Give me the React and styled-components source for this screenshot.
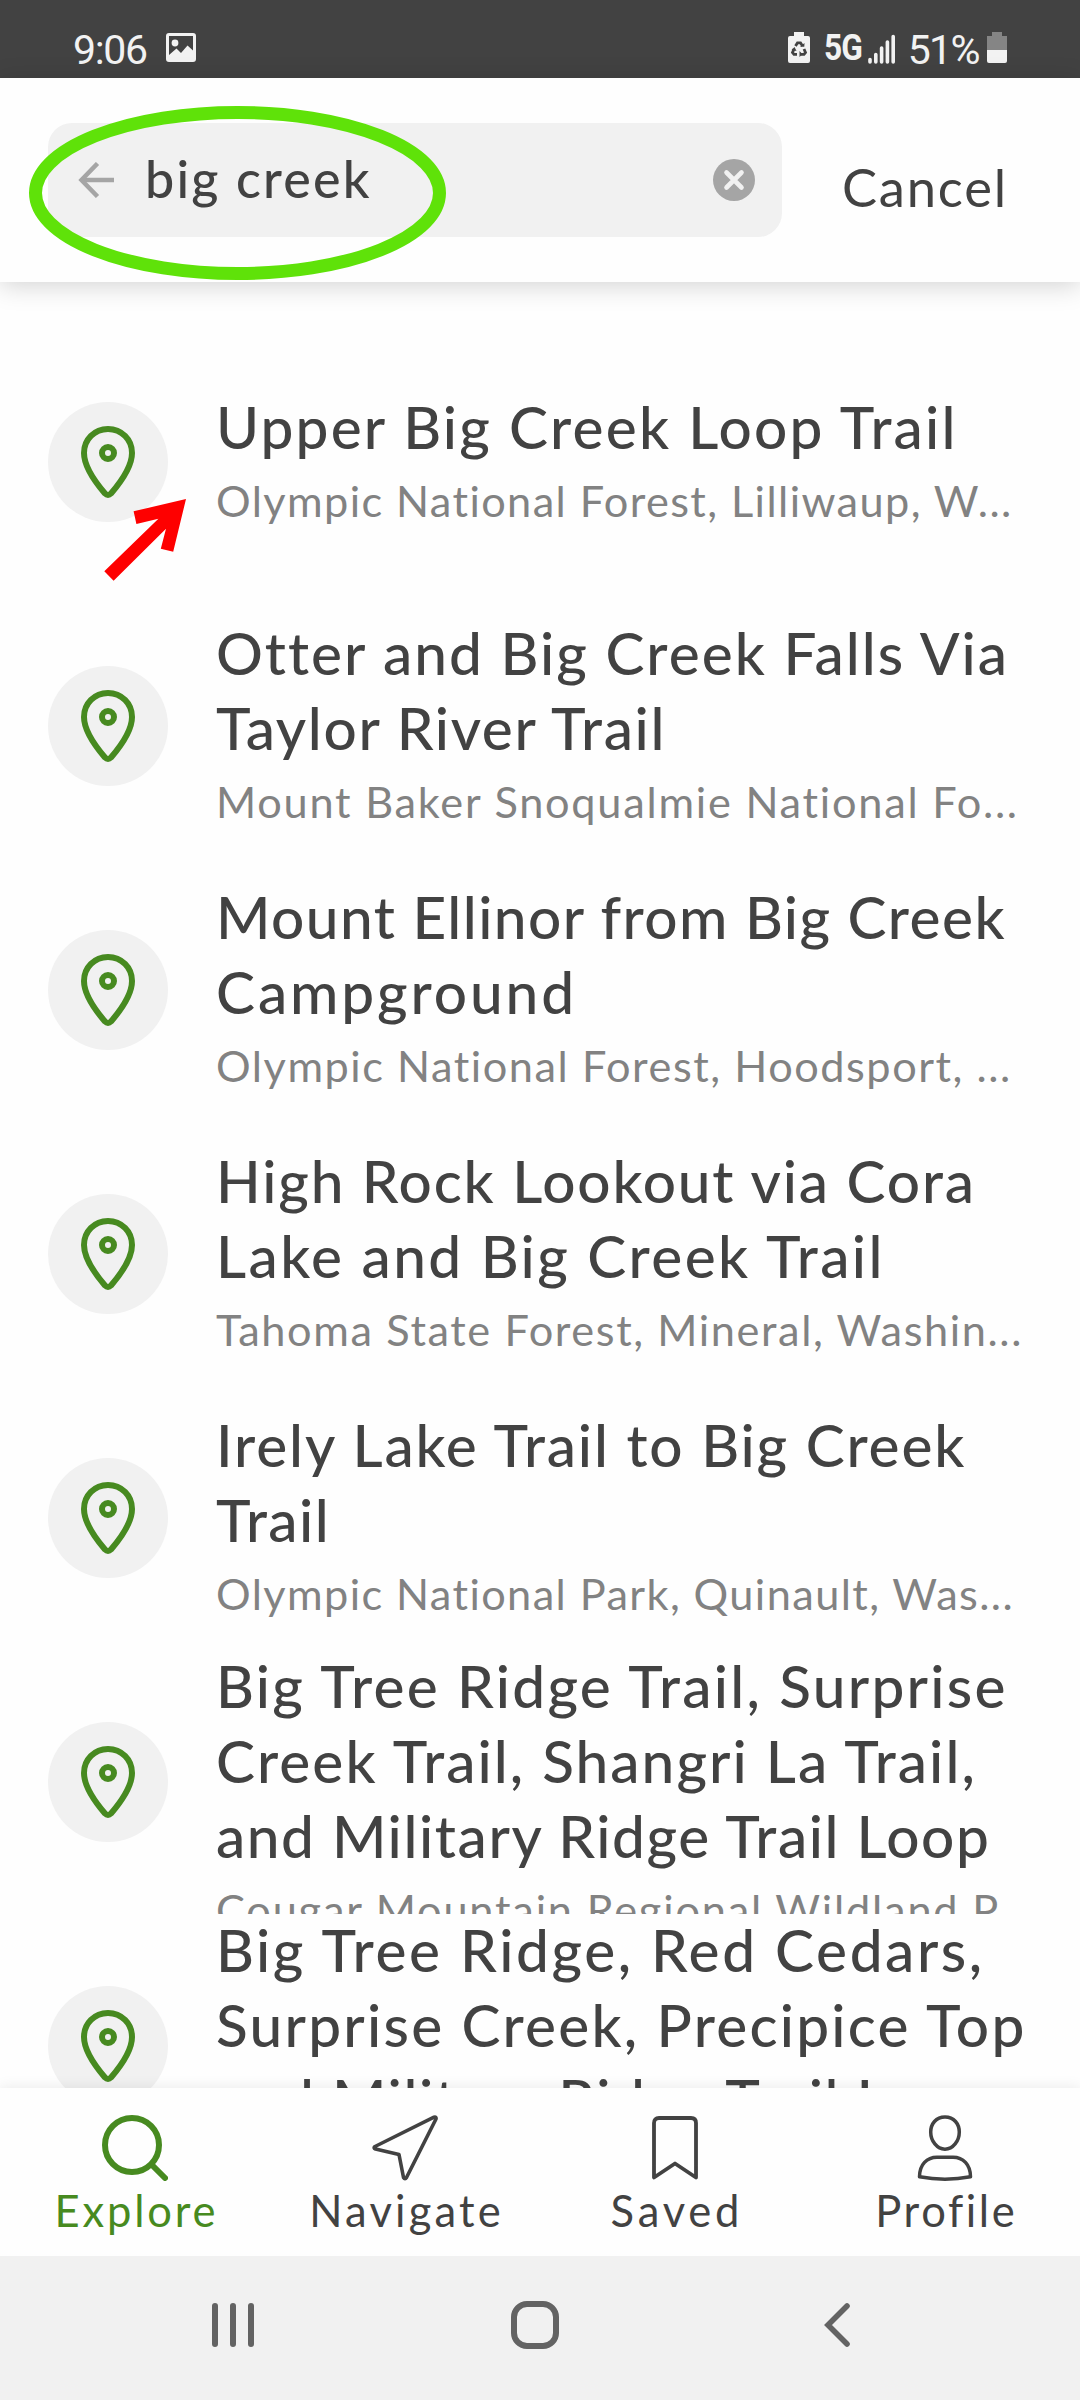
import React from "react";
import styled, { createGlobalStyle } from "styled-components";

const GlobalStyle = createGlobalStyle`
  * {
    box-sizing: border-box;
  }

  body {
    margin: 0;
    background-color: #fefefe;
    font-family: Lato, "Open Sans", sans-serif;
    color: #424242;
  }
`;

const Screen = styled.div`
  position: relative;
  width: 1080px;
  height: 2400px;
  display: flex;
  flex-direction: column;
  overflow: hidden;
`;

const StatusBar = styled.div`
  height: 78px;
  flex-shrink: 0;
  padding: 0 73px;
  background-color: #424242;
  color: #f2f2f2;
  display: flex;
  justify-content: space-between;
`;

const StatusGroup = styled.div`
  display: flex;
  align-items: flex-start;
  padding-top: 32px;
`;

const StatusText = styled.span`
  font-family: Roboto, sans-serif;
  font-size: 41px;
  line-height: 36px;
  letter-spacing: ${(props) => props.$spacing};
  margin-left: ${(props) => props.$left || "0"};
`;

const NetworkText = styled.span`
  width: 39px;
  margin-left: 14px;
  font-family: Roboto, sans-serif;
  font-size: 36px;
  font-weight: 700;
  line-height: 32px;
  letter-spacing: -1px;
  transform: scaleX(0.88);
  transform-origin: left;
`;

const StatusIcon = styled.svg`
  flex-shrink: 0;
  margin-left: ${(props) => props.$left || "0"};
`;

const Header = styled.div`
  position: relative;
  z-index: 2;
  height: 204px;
  flex-shrink: 0;
  padding: 45px 48px 0;
  background-color: #fefefe;
  box-shadow: 0 4px 24px rgba(0, 0, 0, 0.17);
  display: flex;
  align-items: flex-start;
`;

const SearchBox = styled.div`
  width: 734px;
  height: 114px;
  padding: 0 27px 0 30px;
  border-radius: 24px;
  background-color: #f1f1f1;
  display: flex;
  align-items: center;
`;

const Query = styled.div`
  flex: 1;
  margin-left: 30px;
  font-size: 52px;
  font-weight: 500;
  line-height: 60px;
  letter-spacing: 2.2px;
  padding-bottom: 5px;
  white-space: nowrap;
`;

const Cancel = styled.div`
  margin: 34px 0 0 60px;
  font-size: 52.5px;
  line-height: 60px;
  letter-spacing: 1.8px;
`;

const List = styled.div`
  flex: 1;
  min-height: 0;
  padding-top: 48px;
  overflow: hidden;
`;

const Row = styled.div`
  height: 264px;
  padding-left: 48px;
  display: flex;
  align-items: center;
`;

const PinCircle = styled.div`
  width: 120px;
  height: 120px;
  flex-shrink: 0;
  margin-right: 48px;
  border-radius: 50%;
  background-color: #f1f1f1;
  display: flex;
  align-items: center;
  justify-content: center;
`;

const RowText = styled.div`
  flex: 1;
  max-height: 264px;
  overflow: hidden;
`;

const Title = styled.div`
  margin-top: -2.5px;
  font-size: 58.5px;
  font-weight: 500;
  line-height: 75px;
`;

const Line = styled.div`
  white-space: nowrap;
  letter-spacing: ${(props) => props.$spacing}px;
`;

const Place = styled.div`
  height: 69.5px;
  font-size: 43.3px;
  line-height: 73.4px;
  color: #828282;
  white-space: nowrap;
  letter-spacing: ${(props) => props.$spacing}px;
`;

const TabBar = styled.div`
  position: relative;
  z-index: 2;
  height: 168px;
  flex-shrink: 0;
  background-color: #fefefe;
  box-shadow: 0 0 14px rgba(0, 0, 0, 0.09);
  display: grid;
  grid-template-columns: repeat(4, 1fr);
`;

const Tab = styled.div`
  padding-top: 27px;
  color: ${(props) => (props.$active ? "#478a20" : "#424242")};
  display: flex;
  flex-direction: column;
  align-items: center;
`;

const TabLabel = styled.div`
  margin-top: 2px;
  font-size: 43.5px;
  line-height: 54px;
  letter-spacing: ${(props) => props.$spacing}px;
  margin-right: -${(props) => props.$spacing}px;
`;

const SystemBar = styled.div`
  position: relative;
  z-index: 3;
  height: 144px;
  flex-shrink: 0;
  padding: 45px 0 0 209px;
  background-color: #f1f1f1;
  display: flex;
  gap: 254px;
`;

// Hand-drawn marks that float over the page
const Marks = styled.svg`
  position: absolute;
  top: 0;
  left: 0;
  z-index: 3;
  pointer-events: none;
`;

const results = [
  {
    lines: [["Upper Big Creek Loop Trail", 2.2]],
    place: ["Olympic National Forest, Lilliwaup, W...", 1.4],
  },
  {
    lines: [
      ["Otter and Big Creek Falls Via", 2],
      ["Taylor River Trail", 1.65],
    ],
    place: ["Mount Baker Snoqualmie National Fo...", 1.75],
  },
  {
    lines: [
      ["Mount Ellinor from Big Creek", 1.42],
      ["Campground", 2.9],
    ],
    place: ["Olympic National Forest, Hoodsport, ...", 1.53],
  },
  {
    lines: [
      ["High Rock Lookout via Cora", 1.84],
      ["Lake and Big Creek Trail", 2.4],
    ],
    place: ["Tahoma State Forest, Mineral, Washin...", 1.6],
  },
  {
    lines: [
      ["Irely Lake Trail to Big Creek", 1.88],
      ["Trail", 1.5],
    ],
    place: ["Olympic National Park, Quinault, Was...", 1.4],
  },
  {
    lines: [
      ["Big Tree Ridge Trail, Surprise", 2.27],
      ["Creek Trail, Shangri La Trail,", 2.07],
      ["and Military Ridge Trail Loop", 1.58],
    ],
    place: ["Cougar Mountain Regional Wildland P...", 1.8],
  },
  {
    lines: [
      ["Big Tree Ridge, Red Cedars,", 2.6],
      ["Surprise Creek, Precipice Top", 2.25],
      ["and Military Ridge Trail Loop", 1.58],
    ],
    place: ["", 1.5],
  },
];

const PinIcon = () => (
  <svg width="54" height="72" viewBox="0 0 54 72" fill="none" stroke="#478a20" strokeWidth="6">
    <path
      d="M27 3C13.500 3 3 13.500 3 27C3 40 15 57 24 67.500C26 69.500 28 69.500 30 67.500C39 57 51 40 51 27C51 13.500 40.500 3 27 3Z"
      strokeLinejoin="round"
    />
    <circle cx="27" cy="27" r="6" />
  </svg>
);

const ExploreIcon = () => (
  <svg width="66" height="66" viewBox="0 0 66 66" fill="none" stroke="currentColor" strokeWidth="6">
    <circle cx="30" cy="30" r="27" />
    <path d="M50 50L63 63" strokeLinecap="round" />
  </svg>
);

const NavigateIcon = () => (
  <svg width="66" height="66" viewBox="0 0 66 66" fill="none" stroke="currentColor" strokeWidth="3.600">
    <path
      d="M62 2.200L3 31.500Q1 33 3.500 34L27 39.500L31.500 62.500Q33 65 34.500 62.500L64 4Q64.500 1.500 62 2.200Z"
      strokeLinejoin="round"
    />
  </svg>
);

const SavedIcon = () => (
  <svg width="66" height="66" viewBox="0 0 66 66" fill="none" stroke="currentColor" strokeWidth="3.800">
    <path d="M12 62.500V8Q12 3 17 3H49Q54 3 54 8V62.500L33 48.500Z" strokeLinejoin="round" />
  </svg>
);

const ProfileIcon = () => (
  <svg width="66" height="66" viewBox="0 0 66 66" fill="none" stroke="currentColor" strokeWidth="3.500">
    <path d="M33 2C24 2 18.700 9 18.700 17C18.700 26 25 34.200 33 34.200C41 34.200 47.300 26 47.300 17C47.300 9 42 2 33 2Z" />
    <path
      d="M25 42.200H41C51 42.200 58.500 49.500 58.500 61.800Q46 64.200 33 64.200Q20 64.200 7.500 61.800C7.500 49.500 15 42.200 25 42.200Z"
      strokeLinejoin="round"
    />
  </svg>
);

const tabs = [
  { label: "Explore", icon: <ExploreIcon />, spacing: 2.8, active: true },
  { label: "Navigate", icon: <NavigateIcon />, spacing: 3.2 },
  { label: "Saved", icon: <SavedIcon />, spacing: 3.8 },
  { label: "Profile", icon: <ProfileIcon />, spacing: 2.6 },
];

const App = () => {
  return (
    <Screen>
      <GlobalStyle />
      <StatusBar>
        <StatusGroup>
          <StatusText $spacing="-1.3px">9:06</StatusText>
          <StatusIcon $left="19px" width="30" height="32" viewBox="0 0 30 32">
            <path
              fill="#f2f2f2"
              fillRule="evenodd"
              d="M3 1H27Q30 1 30 4V27Q30 30 27 30H3Q0 30 0 27V4Q0 1 3 1ZM3 4V23L10.500 16.500L15 21L21.500 13.500L27 18.500V4Z"
            />
            <circle cx="9" cy="11" r="3.400" fill="#f2f2f2" />
          </StatusIcon>
        </StatusGroup>
        <StatusGroup>
          <StatusIcon width="22" height="31" viewBox="0 0 22 31">
            <path
              fill="#f2f2f2"
              d="M6 0H16V4H20Q22 4 22 6V29Q22 31 20 31H2Q0 31 0 29V6Q0 4 2 4H6Z"
            />
            <path
              d="M7.500 14L9.500 10.800H12.500L14.500 14M16 17L17.500 20.500L16 22.300H12.700M9 22.300H6L4.500 20.500L6 17"
              fill="none"
              stroke="#424242"
              strokeWidth="2.800"
            />
            <path d="M11.500 19L14.500 22.300L11.500 25ZM3.500 18L6.500 15L8.500 19ZM12 14.800H16.300L16.500 11Z" fill="#424242" />
          </StatusIcon>
          <NetworkText>5G</NetworkText>
          <StatusIcon $left="5px" width="28" height="34" viewBox="0 0 28 34">
            <path
              d="M2 27.500V30M7.800 22.500V30M13.600 16V30M19.400 10V30M25.200 4.500V30"
              stroke="#f2f2f2"
              strokeWidth="3.600"
              strokeLinecap="round"
            />
          </StatusIcon>
          <StatusText $spacing="-1.6px" $left="12px">
            51%
          </StatusText>
          <StatusIcon $left="8px" width="20" height="31" viewBox="0 0 20 31">
            <path fill="#858585" d="M5 0H15V4H20V18H0V4H5Z" />
            <path fill="#f2f2f2" d="M0 18H20V29Q20 31 18 31H2Q0 31 0 29Z" />
          </StatusIcon>
        </StatusGroup>
      </StatusBar>

      <Header>
        <SearchBox>
          <svg width="37" height="36" viewBox="0 0 37 36" fill="none" stroke="#a5a5a5" strokeWidth="4.500">
            <path d="M36 18H4" />
            <path d="M19.500 1.500L3.500 18L19.500 34.500" />
          </svg>
          <Query>big creek</Query>
          <svg width="42" height="42" viewBox="0 0 42 42">
            <circle cx="21" cy="21" r="21" fill="#a5a5a5" />
            <path d="M13.500 13.500L28.500 28.500M28.500 13.500L13.500 28.500" stroke="#f1f1f1" strokeWidth="4.600" strokeLinecap="round" />
          </svg>
        </SearchBox>
        <Cancel>Cancel</Cancel>
      </Header>

      <List>
        {results.map((result, i) => (
          <Row key={i}>
            <PinCircle>
              <PinIcon />
            </PinCircle>
            <RowText>
              <Title>
                {result.lines.map(([text, spacing]) => (
                  <Line key={text} $spacing={spacing}>
                    {text}
                  </Line>
                ))}
              </Title>
              <Place $spacing={result.place[1]}>{result.place[0]}</Place>
            </RowText>
          </Row>
        ))}
      </List>

      <TabBar>
        {tabs.map((tab) => (
          <Tab key={tab.label} $active={tab.active}>
            {tab.icon}
            <TabLabel $spacing={tab.spacing}>{tab.label}</TabLabel>
          </Tab>
        ))}
      </TabBar>

      <SystemBar>
        <svg width="48" height="48" viewBox="0 0 48 48" stroke="#636363" strokeWidth="6" strokeLinecap="round">
          <path d="M6 5V43M24 5V43M42 5V43" />
        </svg>
        <svg width="48" height="48" viewBox="0 0 48 48" fill="none" stroke="#636363" strokeWidth="6">
          <rect x="3" y="3" width="42" height="42" rx="13" />
        </svg>
        <svg width="40" height="48" viewBox="-10 0 40 48" fill="none" stroke="#636363" strokeWidth="5.600" strokeLinecap="round">
          <path d="M24 5L5 24L24 43" />
        </svg>
      </SystemBar>

      <Marks width="1080" height="600" viewBox="0 0 1080 600">
        <ellipse cx="237.500" cy="193" rx="202" ry="80.500" fill="none" stroke="#5fe209" strokeWidth="13" />
        <path
          d="M186 499L133.600 511.300L136.400 524L158.400 518.700L104.300 571.300L113.600 580.700L166 528.700L160.800 548.700L173.200 551.700Z"
          fill="#fe0000"
        />
      </Marks>
    </Screen>
  );
};

export default App;
